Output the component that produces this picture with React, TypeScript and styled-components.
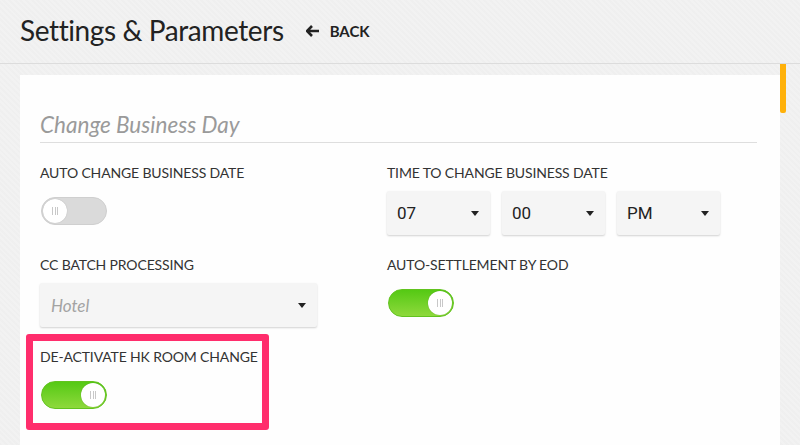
import React from 'react';
import styled, { createGlobalStyle } from 'styled-components';

const GlobalStyle = createGlobalStyle`
  html, body {
    margin: 0;
    padding: 0;
    height: 100%;
    overflow: hidden;
  }
  body {
    font-family: Lato, "Open Sans", sans-serif;
    background: #f2f2f2;
    background-image: repeating-linear-gradient(45deg, rgba(0,0,0,0.012) 0 2px, transparent 2px 4px);
  }
`;

const Page = styled.div`
  width: 800px;
  height: 445px;
  display: flex;
  flex-direction: column;
`;

const Header = styled.header`
  height: 64px;
  box-sizing: border-box;
  border-bottom: 1px solid #dcdcdc;
  display: flex;
  align-items: center;
  padding: 0 20px 3px;
  gap: 22px;
`;

const Title = styled.h1`
  margin: 0;
  font-size: 28px;
  font-weight: 400;
  color: #222;
  letter-spacing: -0.4px;
`;

const BackLink = styled.a`
  display: flex;
  align-items: center;
  gap: 11px;
  font-size: 15px;
  font-weight: 700;
  color: #222;
  text-decoration: none;
  margin-top: 2px;
`;

const Body = styled.div`
  flex: 1;
  display: flex;
  min-height: 0;
`;

const Scroller = styled.div`
  flex: 1;
  padding: 11px 0 0 20px;
  overflow: hidden;
`;

const Track = styled.div`
  width: 20px;
`;

const Thumb = styled.div`
  width: 6px;
  height: 49px;
  background: #ffb10a;
  border-radius: 0 0 2px 2px;
`;

const Card = styled.section`
  background: #fefefe;
  height: 100%;
  box-sizing: border-box;
  padding: 36px 23px 0 20px;
`;

const SectionTitle = styled.h2`
  margin: 0;
  font-size: 22.5px;
  line-height: 28px;
  font-weight: 400;
  font-style: italic;
  color: #9a9a9a;
  padding-bottom: 3px;
  border-bottom: 1px solid #dedede;
`;

const Grid = styled.div`
  display: grid;
  grid-template-columns: 347px 1fr;
  row-gap: 20px;
  padding-top: 20px;
`;

const Field = styled.div<{ $highlight?: boolean }>`
  position: relative;
  ${p =>
    p.$highlight &&
    `
    &::after {
      content: '';
      position: absolute;
      left: -14px;
      top: -13px;
      width: 243px;
      height: 96px;
      box-sizing: border-box;
      border: 7px solid #ff2d6c;
      border-radius: 3px;
      pointer-events: none;
    }
  `}
`;

const Label = styled.div`
  font-size: 14px;
  line-height: 20px;
  letter-spacing: -0.15px;
  color: #333;
  text-transform: uppercase;
`;

const Control = styled.div`
  margin-top: 8px;
  height: 44px;
  display: flex;
  align-items: flex-start;
  gap: 12px;
`;

const SwitchTrack = styled.div<{ $on?: boolean }>`
  margin-top: 6px;
  margin-left: 1px;
  width: 66px;
  height: 28px;
  box-sizing: border-box;
  border-radius: 14px;
  border: 1px solid ${p => (p.$on ? '#62c31f' : '#cfcfcf')};
  background: ${p =>
    p.$on ? 'linear-gradient(to bottom, #55c914, #8ed93c)' : '#dadada'};
  display: flex;
  align-items: center;
  justify-content: ${p => (p.$on ? 'flex-end' : 'flex-start')};
  padding: 0 1px;
`;

const Knob = styled.div`
  width: 24px;
  height: 24px;
  border-radius: 50%;
  background: #fff;
  box-shadow: 0 0 1px rgba(0,0,0,0.25);
  display: flex;
  align-items: center;
  justify-content: center;
  gap: 1.5px;
  span {
    width: 1px;
    height: 8px;
    background: #c8c8c8;
  }
`;

const Switch: React.FC<{ on?: boolean }> = ({ on }) => (
  <SwitchTrack $on={on}>
    <Knob>
      <span />
      <span />
      <span />
    </Knob>
  </SwitchTrack>
);

const SelectBox = styled.div<{ $width: number; $placeholder?: boolean }>`
  width: ${p => p.$width}px;
  height: 44px;
  box-sizing: border-box;
  background: #f5f5f5;
  border-radius: 2px;
  box-shadow: 0 1px 2px rgba(0,0,0,0.18);
  display: flex;
  align-items: center;
  justify-content: space-between;
  padding: 0 11px 0 ${p => (p.$placeholder ? 11 : 10)}px;
  font-family: ${p => (p.$placeholder ? 'Lato, sans-serif' : 'Roboto, "Liberation Sans", sans-serif')};
  font-style: ${p => (p.$placeholder ? 'italic' : 'normal')};
  font-size: 17px;
  color: ${p => (p.$placeholder ? '#a3a3a3' : '#222')};
`;

const Caret = styled.span`
  width: 0;
  height: 0;
  border-left: 4px solid transparent;
  border-right: 4px solid transparent;
  border-top: 5px solid #222;
  margin-top: 1px;
`;

const Select: React.FC<{ value: string; width: number; placeholder?: boolean }> = ({
  value,
  width,
  placeholder,
}) => (
  <SelectBox $width={width} $placeholder={placeholder}>
    <span>{value}</span>
    <Caret />
  </SelectBox>
);

const ArrowLeft = () => (
  <svg width="13" height="12" viewBox="0 0 13 12">
    <path d="M6 1 L1 6 L6 11 M1.5 6 H13" stroke="#222" strokeWidth="2.6" fill="none" strokeLinejoin="miter" />
  </svg>
);

export default function App() {
  return (
    <>
      <GlobalStyle />
      <Page>
        <Header>
          <Title>Settings &amp; Parameters</Title>
          <BackLink href="#">
            <ArrowLeft />
            BACK
          </BackLink>
        </Header>
        <Body>
          <Scroller>
            <Card>
              <SectionTitle>Change Business Day</SectionTitle>
              <Grid>
                <Field>
                  <Label>Auto change business date</Label>
                  <Control>
                    <Switch />
                  </Control>
                </Field>
                <Field>
                  <Label>Time to change business date</Label>
                  <Control>
                    <Select value="07" width={103} />
                    <Select value="00" width={103} />
                    <Select value="PM" width={103} />
                  </Control>
                </Field>
                <Field>
                  <Label>CC batch processing</Label>
                  <Control>
                    <Select value="Hotel" width={277} placeholder />
                  </Control>
                </Field>
                <Field>
                  <Label>Auto-settlement by EOD</Label>
                  <Control>
                    <Switch on />
                  </Control>
                </Field>
                <Field $highlight>
                  <Label>De-activate HK room change</Label>
                  <Control>
                    <Switch on />
                  </Control>
                </Field>
              </Grid>
            </Card>
          </Scroller>
          <Track>
            <Thumb />
          </Track>
        </Body>
      </Page>
    </>
  );
}
